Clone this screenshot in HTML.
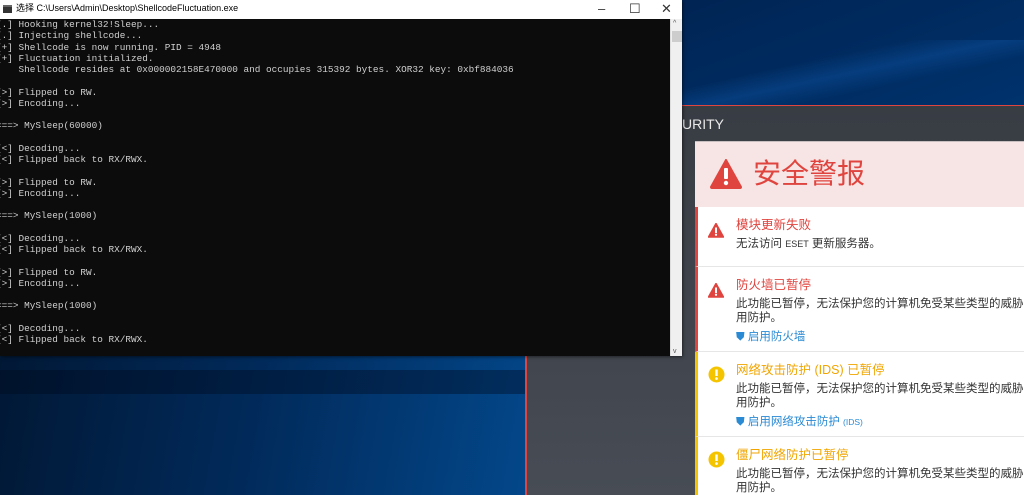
<!DOCTYPE html>
<html><head><meta charset="utf-8"><style>
*{margin:0;padding:0;box-sizing:border-box}
html{width:1024px;height:495px;overflow:hidden}
body{width:1024px;height:495px;overflow:hidden;position:relative;background:linear-gradient(160deg,#00163a 0%,#002a5e 40%,#003a7a 70%,#004c96 100%);font-family:"Liberation Sans","Noto Sans CJK SC",sans-serif}
.desk2{position:absolute;left:0;top:356px;width:525px;height:139px;background:linear-gradient(100deg,#011835 0%,#012b5c 50%,#03478a 100%)}
.band{position:absolute;left:0;top:370px;width:525px;height:24px;background:rgba(0,10,30,.4)}
.streak{position:absolute;left:682px;top:40px;width:342px;height:65px;background:linear-gradient(168deg,transparent 35%,rgba(20,100,190,.3) 50%,transparent 65%)}
.con{position:absolute;left:0;top:0;width:682px;height:356px;background:#0c0c0c;box-shadow:1px 1px 3px rgba(0,0,0,.5)}
.tb{height:19px;background:#fff;font-size:9px;color:#000;line-height:17px;padding-left:16px;position:relative}
.tb i{position:absolute;left:3px;top:5px;width:9px;height:8px;background:#333;border-top:2px solid #666}
.ctl{position:absolute;top:0;font-size:13px;line-height:17px;color:#333}
pre{position:absolute;left:-4px;top:19px;font-family:"Liberation Mono",monospace;font-size:9.4px;line-height:11.25px;color:#d0d0d0}
.sb{position:absolute;left:670px;top:19px;width:12px;height:337px;background:#f0f0f0;border-left:1px solid #ddd}
.sb .th{position:absolute;left:1px;top:12px;width:10px;height:11px;background:#cdcdcd}
.sb span{position:absolute;left:2px;font-size:7px;color:#555}
.eset{position:absolute;left:525px;top:105px;width:499px;height:390px;background:linear-gradient(#383c43,#474c55);border-top:1px solid #e0443e;border-left:2px solid #e0443e}
.hdr{position:absolute;left:682px;top:116px;color:#e8e8e8;font-size:14px}
.panel{position:absolute;left:695px;top:141px;width:329px;height:354px;background:#fff;overflow:hidden}
.ph{height:66px;background:#f7e4e4;position:relative;border-top:1px solid #c8c0c0}
.ph .t{position:absolute;left:58px;top:13px;font-size:28px;color:#e0443e;line-height:38px}
.it{position:relative;border-bottom:1px solid #e6e6e6;padding-left:38px}
.it.r{border-left:3px solid #e0443e}.it.y{border-left:3px solid #f5c400}
.it h4{font-weight:normal;font-size:12.5px;line-height:17px;margin-bottom:3px}
.r h4{color:#e0443e}.y h4{color:#f0a500}
.it p{font-size:11.5px;color:#333;line-height:14px;white-space:nowrap}
.it a{display:block;font-size:11.5px;color:#2a8ad4;line-height:14px}
.ic{position:absolute;left:10px}
</style></head><body>
<div class="desk2"></div><div class="band"></div><div class="streak"></div>
<div class="eset"></div>
<div class="hdr">URITY</div>
<div class="panel">
 <div class="ph"><svg style="position:absolute;left:15px;top:17px" width="32" height="30" viewBox="0 0 32 30"><path d="M16 1 L31 28 Q31 29 30 29 L2 29 Q1 29 1 28 Z" fill="#e0443e" stroke="#e0443e" stroke-linejoin="round" stroke-width="2"/><rect x="14" y="9" width="4" height="11" rx="1" fill="#fff"/><circle cx="16" cy="24" r="2.2" fill="#fff"/></svg><div class="t">安全警报</div></div>
 <div class="it r" style="height:60px;padding-top:10px"><svg class="ic" style="top:16px" width="16" height="15" viewBox="0 0 32 30"><path d="M16 1 L31 28 L1 28 Z" fill="#e0443e" stroke="#e0443e" stroke-linejoin="round" stroke-width="3"/><rect x="14" y="9" width="4" height="11" fill="#fff"/><circle cx="16" cy="23.5" r="2.3" fill="#fff"/></svg><h4>模块更新失败</h4><p>无法访问 <span style="font-size:9px">ESET</span> 更新服务器。</p></div>
 <div class="it r" style="height:85px;padding-top:10px"><svg class="ic" style="top:16px" width="16" height="15" viewBox="0 0 32 30"><path d="M16 1 L31 28 L1 28 Z" fill="#e0443e" stroke="#e0443e" stroke-linejoin="round" stroke-width="3"/><rect x="14" y="9" width="4" height="11" fill="#fff"/><circle cx="16" cy="23.5" r="2.3" fill="#fff"/></svg><h4>防火墙已暂停</h4><p>此功能已暂停，无法保护您的计算机免受某些类型的威胁。无</p><p>用防护。</p><a style="margin-top:5px">⛊ 启用防火墙</a></div>
 <div class="it y" style="height:85px;padding-top:10px"><svg class="ic" style="top:14px" width="17" height="17" viewBox="0 0 17 17"><circle cx="8.5" cy="8.5" r="8" fill="#f5c400"/><rect x="7.3" y="3.5" width="2.4" height="6.5" fill="#fff"/><circle cx="8.5" cy="12.6" r="1.3" fill="#fff"/></svg><h4>网络攻击防护 (IDS) 已暂停</h4><p>此功能已暂停，无法保护您的计算机免受某些类型的威胁。无</p><p>用防护。</p><a style="margin-top:5px">⛊ 启用网络攻击防护 <span style="font-size:8.5px">(IDS)</span></a></div>
 <div class="it y" style="height:70px;padding-top:10px;border-bottom:0"><svg class="ic" style="top:14px" width="17" height="17" viewBox="0 0 17 17"><circle cx="8.5" cy="8.5" r="8" fill="#f5c400"/><rect x="7.3" y="3.5" width="2.4" height="6.5" fill="#fff"/><circle cx="8.5" cy="12.6" r="1.3" fill="#fff"/></svg><h4>僵尸网络防护已暂停</h4><p>此功能已暂停，无法保护您的计算机免受某些类型的威胁。无</p><p>用防护。</p></div>
</div>
<div class="con">
 <div class="tb"><i></i>选择 C:\Users\Admin\Desktop\ShellcodeFluctuation.exe
  <span class="ctl" style="left:598px">–</span><span class="ctl" style="left:629px">☐</span><span class="ctl" style="left:661px">✕</span></div>
<pre>[.] Hooking kernel32!Sleep...
[.] Injecting shellcode...
[+] Shellcode is now running. PID = 4948
[+] Fluctuation initialized.
    Shellcode resides at 0x000002158E470000 and occupies 315392 bytes. XOR32 key: 0xbf884036

[>] Flipped to RW.
[>] Encoding...

===> MySleep(60000)

[<] Decoding...
[<] Flipped back to RX/RWX.

[>] Flipped to RW.
[>] Encoding...

===> MySleep(1000)

[<] Decoding...
[<] Flipped back to RX/RWX.

[>] Flipped to RW.
[>] Encoding...

===> MySleep(1000)

[<] Decoding...
[<] Flipped back to RX/RWX.</pre>
 <div class="sb"><span style="top:1px">^</span><div class="th"></div><span style="bottom:1px">v</span></div>
</div>
</body></html>
